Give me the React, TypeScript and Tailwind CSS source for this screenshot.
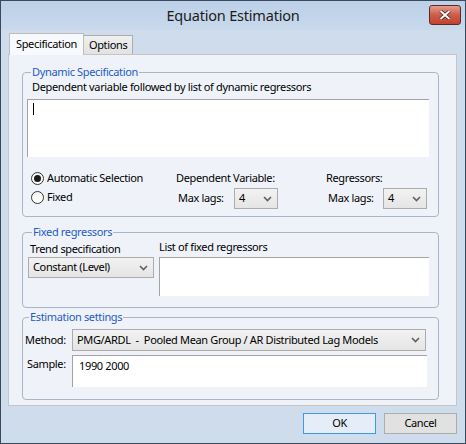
import React from "react";

const font = { fontFamily: '"Noto Sans", "Open Sans", sans-serif', letterSpacing: "-0.35px" };

function Combo({ value, className }: { value: string; className: string }) {
    return (
        <div className={`flex items-center justify-between border border-[#acacac] bg-gradient-to-b from-[#f2f2f2] to-[#e5e5e5] pl-[4px] pr-[5px] ${className}`}>
            <span className="whitespace-pre">{value}</span>
            <svg width="9" height="6" viewBox="0 0 9 6" fill="none" stroke="#606060" strokeWidth="1.6">
                <path d="M1 1l3.5 3.5L8 1" />
            </svg>
        </div>
    );
}

function TextBox({ className, children }: { className: string; children?: React.ReactNode }) {
    return (
        <div className={`bg-white border-t border-l border-[#a3a3a3] ${className}`}>{children}</div>
    );
}

function Radio({ checked, label }: { checked?: boolean; label: string }) {
    return (
        <div className="flex items-center gap-[3px] h-[19px]">
            <span className="w-[13px] h-[13px] rounded-full border border-[#333] bg-gradient-to-b from-[#f4f4f4] to-white flex items-center justify-center">
                {checked && <span className="w-[7px] h-[7px] rounded-full bg-[#1a1a1a]" />}
            </span>
            <span>{label}</span>
        </div>
    );
}

function Group({ title, className, children }: { title: string; className: string; children: React.ReactNode }) {
    return (
        <fieldset className={`border border-[#a9b6c8] rounded-[4px] ${className}`}>
            <legend className="ml-[4px] px-[1px] text-[#1d5bc6] leading-[14px]">{title}</legend>
            {children}
        </fieldset>
    );
}

export default function App() {
    return (
        <div className="w-[466px] h-[444px] text-[11px] text-black bg-[#cfdcec] border border-[#3a4a5e] flex flex-col" style={font}>
            {/* title bar */}
            <div className="h-[29px] flex items-center relative bg-gradient-to-b from-[#bcd0e8] to-[#c9d9ec]">
                <div className="flex-1 text-center text-[14.5px] text-[#1b1b1b] tracking-[-0.2px]">Equation Estimation</div>
                <div className="absolute right-[4px] top-[4px] w-[32px] h-[20px] rounded-[3px] border border-[#5e2a28] bg-gradient-to-b from-[#e59c8e] via-[#cc5d4a] to-[#c3402d] flex items-center justify-center">
                    <svg width="12" height="10" viewBox="0 0 12 10">
                        <path d="M1.5 1l9 8M10.5 1l-9 8" stroke="#4a1c16" strokeWidth="3.4" />
                        <path d="M1.5 1l9 8M10.5 1l-9 8" stroke="#fff" strokeWidth="2" />
                    </svg>
                </div>
            </div>

            <div className="px-[7px] flex flex-col">
                {/* tabs */}
                <div className="flex items-end h-[24px] pl-[1px]">
                    <div className="h-[22px] px-[6px] bg-[#f7f9fc] border border-b-0 border-[#bdbdbd] flex items-center relative z-10 -mb-[1px]">Specification</div>
                    <div className="h-[19px] px-[5px] bg-gradient-to-b from-[#f0f0f0] to-[#e2e2e2] border border-b-0 border-l-0 border-[#adadad] flex items-center">Options</div>
                </div>

                {/* panel */}
                <div className="h-[352px] w-[449px] border border-[#c6c6c6] bg-[#eff3f9] pl-[13px] pr-[17px] pt-[10px] flex flex-col">
                    <Group title="Dynamic Specification" className="h-[152px] px-[4px]">
                        <div className="pl-[5px] h-[19px] leading-[19px] -mt-[2px]">Dependent variable followed by list of dynamic regressors</div>
                        <TextBox className="h-[58px] w-[402px] mt-[3px] pl-[5px] pt-[3px]">
                            <div className="w-[1px] h-[12px] bg-black" />
                        </TextBox>
                        <div className="flex mt-[12px]">
                            <div className="w-[149px] pl-[4px] flex flex-col gap-0">
                                <Radio checked label="Automatic Selection" />
                                <Radio label="Fixed" />
                            </div>
                            <div className="w-[150px] flex flex-col">
                                <div className="h-[17px] leading-[17px]">Dependent Variable:</div>
                                <div className="flex items-center mt-[2px]">
                                    <span className="w-[58px] pl-[2px]">Max lags:</span>
                                    <Combo value="4" className="w-[44px] h-[21px]" />
                                </div>
                            </div>
                            <div className="flex flex-col">
                                <div className="h-[17px] leading-[17px]">Regressors:</div>
                                <div className="flex items-center mt-[2px]">
                                    <span className="w-[57px] pl-[2px]">Max lags:</span>
                                    <Combo value="4" className="w-[44px] h-[21px]" />
                                </div>
                            </div>
                        </div>
                    </Group>

                    <Group title="Fixed regressors" className="h-[83px] mt-[8px] px-[5px]">
                        <div className="flex gap-[5px]">
                            <div className="flex flex-col w-[126px]">
                                <div className="h-[18px] leading-[20px] pl-[2px]">Trend specification</div>
                                <Combo value="Constant (Level)" className="w-[126px] h-[21px]" />
                            </div>
                            <div className="flex flex-col">
                                <div className="h-[18px] leading-[16px]">List of fixed regressors</div>
                                <TextBox className="w-[270px] h-[39px]" />
                            </div>
                        </div>
                    </Group>

                    <Group title="Estimation settings" className="h-[90px] mt-[2px] pl-[2px]">
                        <div className="flex flex-col gap-[4px] mt-[5px]">
                            <div className="flex items-center">
                                <span className="w-[47px]">Method:</span>
                                <Combo value="PMG/ARDL  -  Pooled Mean Group / AR Distributed Lag Models" className="w-[354px] h-[22px]" />
                            </div>
                            <div className="flex items-start">
                                <span className="w-[47px] pl-[2px] pt-[1px]">Sample:</span>
                                <TextBox className="w-[355px] h-[32px] pl-[6px] pt-[2px]">1990 2000</TextBox>
                            </div>
                        </div>
                    </Group>
                </div>

                {/* buttons */}
                <div className="flex justify-end gap-[8px] mt-[7px] pr-[1px]">
                    <button className="w-[73px] h-[21px] border border-[#3c9be8] bg-[#e5eef8]">OK</button>
                    <button className="w-[73px] h-[21px] border border-[#adadad] bg-[#e1e1e1]">Cancel</button>
                </div>
            </div>
        </div>
    );
}
